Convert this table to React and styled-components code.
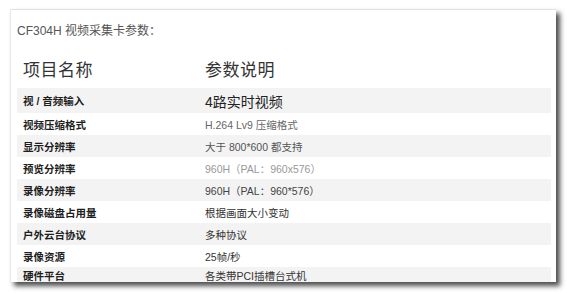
import React from 'react';
import styled, { createGlobalStyle } from 'styled-components';

const Global = createGlobalStyle`
  html, body {
    margin: 0;
    padding: 0;
    background: #ffffff;
  }
  body {
    font-family: "Liberation Sans", "Noto Sans CJK SC", sans-serif;
  }
`

const Page = styled.div`
  width: 567px;
  height: 293px;
  padding: 9px 0 0 10px;
  box-sizing: border-box;
`

const Card = styled.div`
  width: 546px;
  height: 273px;
  box-sizing: border-box;
  background: #fff;
  border-top: 1px solid #e2e2e2;
  border-left: 1px solid #e8e8e8;
  box-shadow: 4px 4px 5px rgba(0, 0, 0, 0.7);
  overflow: hidden;
  padding: 13px 5px 0 6px;
`

const Title = styled.div`
  font-size: 12px;
  line-height: 16px;
  color: #555;
  margin-bottom: 16px;
`

const Table = styled.div`
  display: flex;
  flex-direction: column;
  width: 534px;
`

const Row = styled.div`
  display: grid;
  grid-template-columns: 182px 1fr;
  align-items: center;
  height: ${p => p.h || 22}px;
  background: ${p => (p.striped ? '#f3f3f3' : 'transparent')};
  margin-bottom: ${p => p.gap || 0}px;
`

const HeadCell = styled.div`
  padding-left: 6px;
  font-size: 17px;
  letter-spacing: 0.5px;
  color: #333;
`

const NameCell = styled.div`
  padding-left: 6px;
  font-size: 10.5px;
  font-weight: bold;
  color: #1e1e1e;
  white-space: nowrap;
`

const ValueCell = styled.div`
  padding-left: 6px;
  font-size: ${p => p.size || 10.5}px;
  color: ${p => p.color || '#333'};
  white-space: nowrap;
`

const rows = [
  { name: '视 / 音频输入', value: '4路实时视频', size: 14, color: '#222', h: 25 },
  { name: '视频压缩格式', value: 'H.264 Lv9 压缩格式', color: '#666' },
  { name: '显示分辨率', value: '大于 800*600 都支持', color: '#555' },
  { name: '预览分辨率', value: '960H（PAL：960x576）', color: '#999' },
  { name: '录像分辨率', value: '960H（PAL：960*576）', color: '#444' },
  { name: '录像磁盘占用量', value: '根据画面大小变动' },
  { name: '户外云台协议', value: '多种协议' },
  { name: '录像资源', value: '25帧/秒' },
  { name: '硬件平台', value: '各类带PCI插槽台式机', h: 16 },
];

export default function App() {
  return (
    <Page>
      <Global />
      <Card>
        <Title>CF304H 视频采集卡参数：</Title>
        <Table>
          <Row h={26} gap={7}>
            <HeadCell>项目名称</HeadCell>
            <HeadCell>参数说明</HeadCell>
          </Row>
          {rows.map((r, i) => (
            <Row key={r.name} h={r.h} striped={i % 2 === 0}>
              <NameCell>{r.name}</NameCell>
              <ValueCell size={r.size} color={r.color}>{r.value}</ValueCell>
            </Row>
          ))}
        </Table>
      </Card>
    </Page>
  );
}
